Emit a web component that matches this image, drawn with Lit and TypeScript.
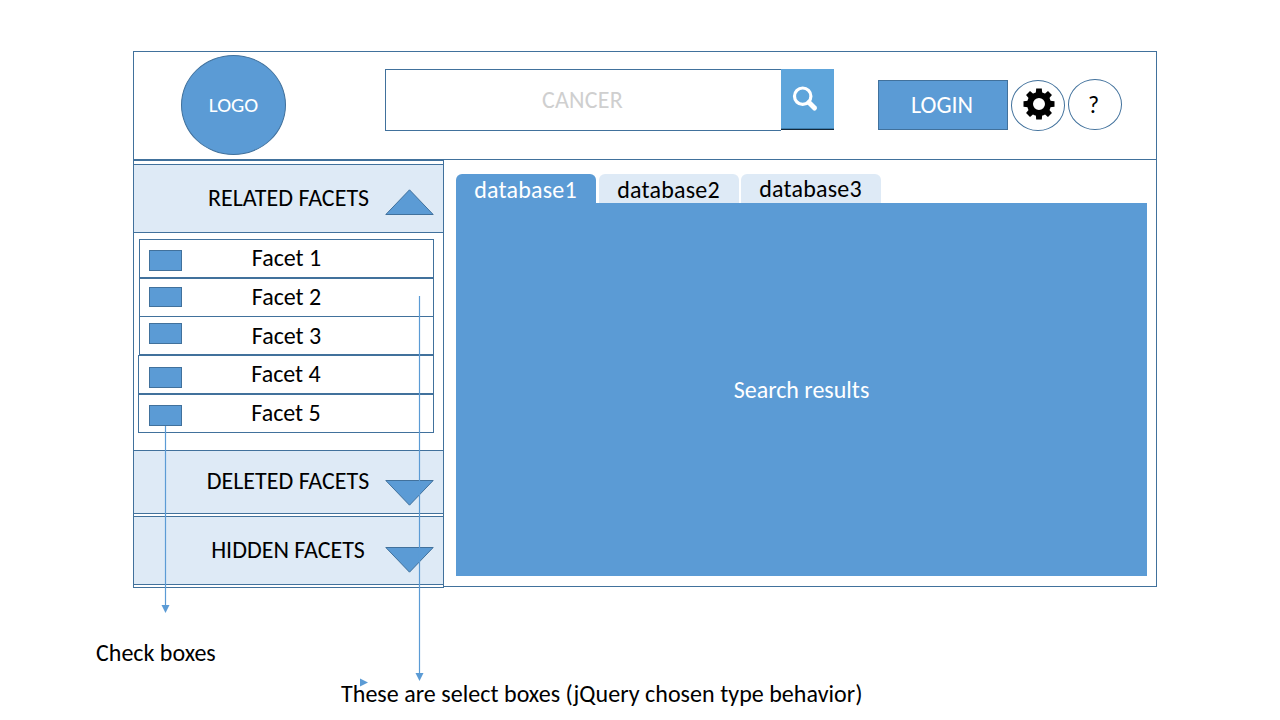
import { LitElement, html, css, svg } from "lit";
import { customElement, property } from "lit/decorators.js";
import { classMap } from "lit/directives/class-map.js";

const gearTeeth = [0, 45, 90, 135, 180, 225, 270, 315];

@customElement("facet-heading")
class FacetHeading extends LitElement {
  @property() label = "";
  @property() kind = "related";

  static styles = css`
    :host { display: block; }
    .bar {
      box-sizing: border-box;
      display: grid;
      grid-template-columns: 1fr auto 1fr;
      align-items: center;
      border: 1px solid #41719c;
      background: #deeaf6;
      padding-right: 9px;
      padding-left: 9px;
    }
    .related { height: 69px; }
    .deleted { height: 64px; }
    .hidden { height: 69px; margin-top: 2px; }
    .label {
      grid-column: 2;
      padding-bottom: 2px;
      font-size: 24px;
      line-height: 26px;
      white-space: nowrap;
    }
    .deleted .label { margin-left: -1px; }
    .hidden .label { padding-bottom: 1px; margin-left: -1px; }
    .arrow { justify-self: end; display: block; width: 49px; height: 26px; }
    .related .arrow { margin-top: 7px; }
    .deleted .arrow { margin-top: 22px; }
    .hidden .arrow { margin-top: 19px; }
  `;

  render() {
    const points = this.kind === "related" ? "0.8,25.5 24.5,0.8 48.2,25.5" : "0.8,0.5 24.5,25.2 48.2,0.5";
    return html`<div class="bar ${this.kind}">
      <span class="label">${this.label}</span>
      <svg class="arrow" viewBox="0 0 49 26">
        <polygon points=${points} fill="#5b9bd5" stroke="#41719c" stroke-width="1" />
      </svg>
    </div>`;
  }
}

@customElement("app-root")
class AppRoot extends LitElement {
  static styles = css`
    :host {
      display: block;
      font-family: Carlito, Calibri, Lato, sans-serif;
      color: #000;
    }
    .page {
      box-sizing: border-box;
      position: relative;
      width: 1280px;
      height: 720px;
      overflow: hidden;
      background: #fff;
      padding: 51px 0 0 133px;
    }
    .frame {
      box-sizing: border-box;
      width: 1024px;
      height: 536px;
      border: 1px solid #41719c;
    }
    .header {
      box-sizing: border-box;
      display: flex;
      align-items: flex-start;
      height: 108px;
      border-bottom: 1px solid #41719c;
      padding-left: 47px;
    }
    .logo {
      box-sizing: border-box;
      display: flex;
      align-items: center;
      justify-content: center;
      width: 105px;
      height: 100px;
      margin-top: 3px;
      border: 1px solid #41719c;
      border-radius: 50%;
      background: #5b9bd5;
      color: #fff;
      font-size: 21px;
    }
    .search { display: flex; margin: 17px 0 0 99px; }
    .query {
      box-sizing: border-box;
      width: 396px;
      height: 62px;
      border: 1px solid #41719c;
      border-right: 0;
      padding-right: 2px;
      text-align: center;
      font-size: 24px;
      letter-spacing: 0.2px;
      line-height: 59px;
      color: #cfcfcf;
    }
    .go {
      box-sizing: border-box;
      width: 53px;
      height: 61px;
      background: #5ea5db;
      border-bottom: 1px solid #14283a;
      box-shadow: inset 0 -1px 0 #3f7fae;
    }
    .go svg { display: block; }
    .login {
      box-sizing: border-box;
      width: 130px;
      height: 50px;
      margin: 28px 0 0 44px;
      border: 1px solid #41719c;
      background: #5b9bd5;
      color: #fff;
      text-align: center;
      font-size: 24px;
      line-height: 47px;
      padding-right: 2px;
    }
    .round {
      box-sizing: border-box;
      display: flex;
      align-items: center;
      justify-content: center;
      width: 54px;
      height: 51px;
      border: 1px solid #41719c;
      border-radius: 50%;
    }
    .gear { margin: 28px 0 0 3px; }
    .gear svg { display: block; margin: -3px 0 0 1px; }
    .help { margin: 27px 0 0 3px; font-size: 24px; padding-right: 3px; }
    .body { display: flex; align-items: flex-start; }
    .sidebar {
      box-sizing: border-box;
      width: 311px;
      height: 428px;
      flex: none;
      margin-left: -1px;
      border: 1px solid #41719c;
      background: #fff;
      padding-top: 3px;
    }
    .sidebar facet-heading { margin: 0 -1px; }
    .facets { box-sizing: content-box; padding: 6px 9px 0 5px; height: 211px; }
    .facet {
      box-sizing: border-box;
      display: grid;
      grid-template-columns: 1fr auto 1fr;
      height: 39px;
      border: 1px solid #41719c;
      padding-left: 9px;
      padding-right: 9px;
      font-size: 24px;
      line-height: 35px;
    }
    .wide { margin-left: -1px; padding-left: 10px; padding-right: 10px; }
    .joined { margin-top: -1px; line-height: 37px; }
    .box {
      box-sizing: border-box;
      width: 33px;
      height: 21px;
      border: 1px solid #41719c;
      background: #5b9bd5;
    }
    .short { height: 20px; }
    .content { margin: 14px 0 0 12px; width: 691px; }
    .tabs { display: flex; height: 29px; }
    .tab {
      box-sizing: border-box;
      width: 140px;
      height: 29px;
      border-radius: 6px 6px 0 0;
      background: #deeaf6;
      padding-right: 1px;
      text-align: center;
      font-size: 24px;
      letter-spacing: 0.2px;
      line-height: 32px;
      margin-right: 3px;
    }
    .tab + .tab { margin-right: 2px; }
    .tab:last-child { line-height: 30px; }
    .active { background: #5b9bd5; color: #fff; }
    .results {
      box-sizing: border-box;
      display: flex;
      align-items: center;
      justify-content: center;
      height: 373px;
      padding-bottom: 1px;
      background: #5b9bd5;
      color: #fff;
      font-size: 24px;
    }
    .notes { font-size: 24px; line-height: 26px; white-space: nowrap; }
    .note-checks { margin: 53px 0 0 -37px; }
    .note-selects { margin: 15px 0 0 208px; letter-spacing: 0.04px; }
    .connectors { position: absolute; left: 0; top: 0; pointer-events: none; }
  `;

  private facets = [
    { name: "Facet 1", offset: 10, joined: false, wide: false, short: false },
    { name: "Facet 2", offset: 8, joined: false, wide: false, short: true },
    { name: "Facet 3", offset: 6, joined: true, wide: false, short: false },
    { name: "Facet 4", offset: 11, joined: false, wide: true, short: false },
    { name: "Facet 5", offset: 10, joined: false, wide: true, short: false },
  ];

  render() {
    return html`<div class="page">
      <div class="frame">
        <div class="header">
          <div class="logo">LOGO</div>
          <div class="search">
            <div class="query">CANCER</div>
            <div class="go">
              <svg width="53" height="59" viewBox="0 0 53 59">
                <circle cx="21.7" cy="27.2" r="8.2" fill="none" stroke="#fff" stroke-width="3.2" />
                <path d="M28 33.5L33.5 39" stroke="#fff" stroke-width="5" stroke-linecap="round" />
              </svg>
            </div>
          </div>
          <div class="login">LOGIN</div>
          <div class="round gear">
            <svg width="32" height="32" viewBox="-16 -16 32 32">
              <circle r="9" fill="none" stroke="#000" stroke-width="6" />
              ${gearTeeth.map(
                (a) => svg`<path d="M-3.2-11L-2.8-15.500H2.8L3.2-11Z" transform="rotate(${a})" />`
              )}
            </svg>
          </div>
          <div class="round help">?</div>
        </div>
        <div class="body">
          <div class="sidebar">
            <facet-heading label="RELATED FACETS" kind="related"></facet-heading>
            <div class="facets">
              ${this.facets.map(
                (f) => html`<div class=${classMap({ facet: true, joined: f.joined, wide: f.wide })}>
                  <span class=${classMap({ box: true, short: f.short })} style="margin-top:${f.offset}px"></span>
                  <span>${f.name}</span>
                </div>`
              )}
            </div>
            <facet-heading label="DELETED FACETS" kind="deleted"></facet-heading>
            <facet-heading label="HIDDEN FACETS" kind="hidden"></facet-heading>
          </div>
          <div class="content">
            <div class="tabs">
              <div class="tab active">database1</div>
              <div class="tab">database2</div>
              <div class="tab">database3</div>
            </div>
            <div class="results">Search results</div>
          </div>
        </div>
      </div>
      <div class="notes">
        <div class="note-checks">Check boxes</div>
        <div class="note-selects">These are select boxes (jQuery chosen type behavior)</div>
      </div>
      <svg class="connectors" width="1280" height="720" viewBox="0 0 1280 720">
        <path d="M165.5 426V606M419.5 296V674" fill="none" stroke="#5b9bd5" stroke-width="1.2" />
        <path d="M161.5 605H169.5L165.5 613ZM415.5 673H423.5L419.5 681ZM360 678.5V686.5L368 682.5Z" fill="#5b9bd5" />
      </svg>
    </div>`;
  }
}
